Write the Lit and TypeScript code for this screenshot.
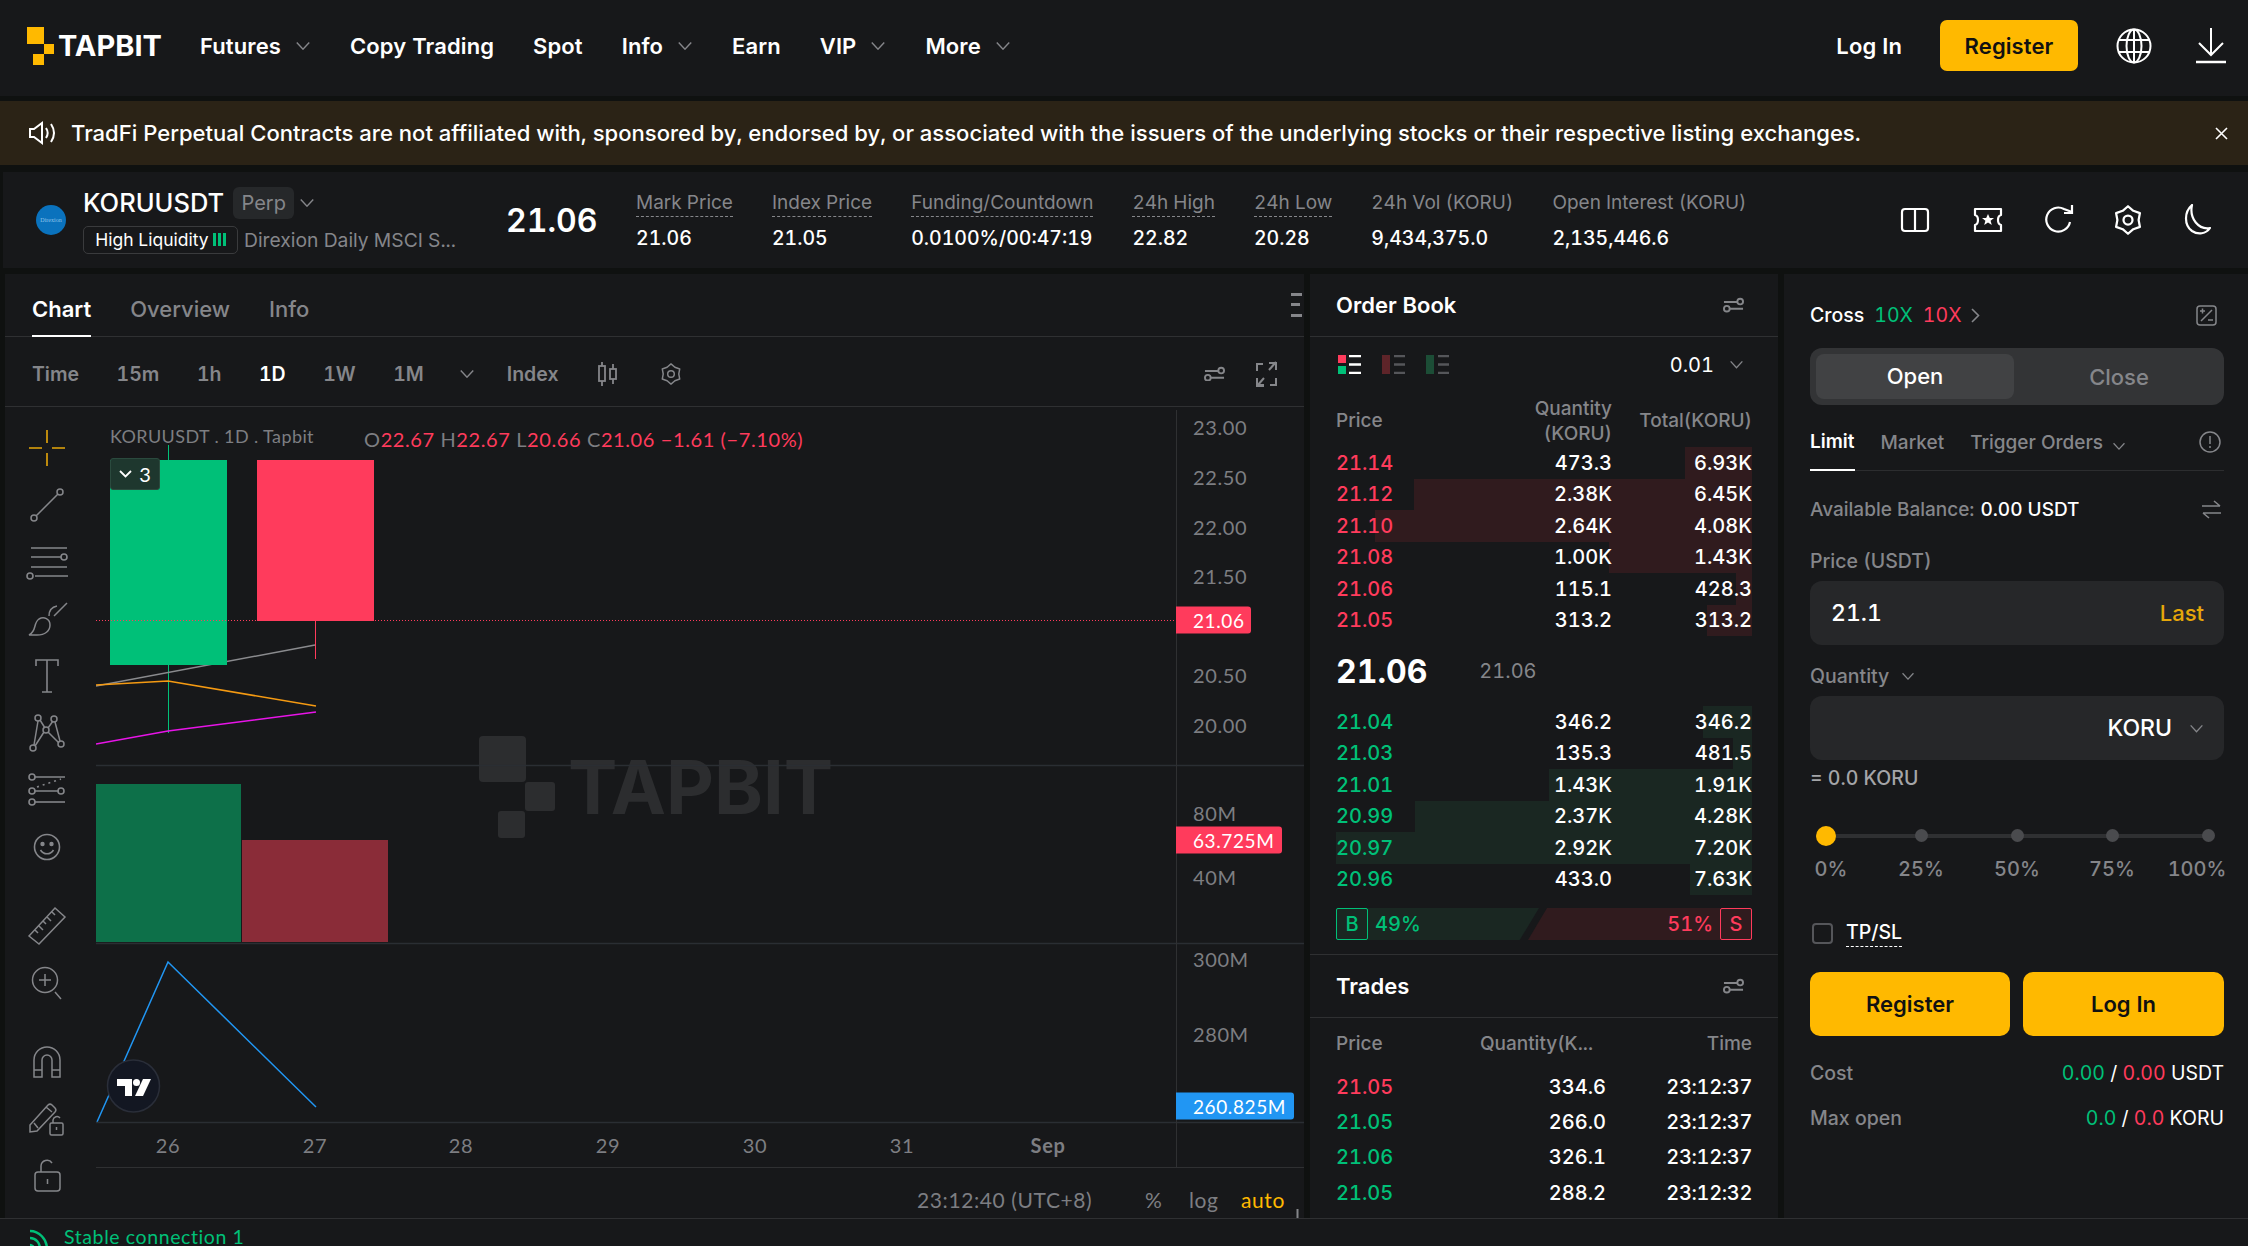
import { LitElement, css, html } from "lit";
import { customElement } from "lit/decorators.js";

const chev = (w = 16, cls = "") =>
  html`<svg class="chev ${cls}" width=${w} height=${w * 0.6} viewBox="0 0 16 10" fill="none" stroke="currentColor" stroke-width="1.5"><path d="M1.5 1.5 8 8.5l6.5-7" /></svg>`;

const sliders = (w = 21) =>
  html`<svg class="ico" width=${w} height=${w * 0.75} viewBox="0 0 22 16" fill="none" stroke="#85868a" stroke-width="2"><path d="M1 5h14M7 12h14" /><circle cx="18" cy="4.5" r="3" /><circle cx="4" cy="12" r="3" /></svg>`;

const gearPts =
  "12,1 16.25,4.64 21.53,6.5 20.5,12 21.53,17.5 16.25,19.36 12,23 7.75,19.36 2.47,17.5 3.5,12 2.47,6.5 7.75,4.64";

const gear = (size: number, color: string, sw = 1.6) =>
  html`<svg width=${size} height=${size} viewBox="0 0 24 24" fill="none" stroke=${color} stroke-width=${sw} stroke-linejoin="round"><polygon points=${gearPts} /><circle cx="12" cy="12" r="3.6" /></svg>`;

const tools = [
  [
    html`<svg width="36" height="36" viewBox="0 0 36 36" stroke="#e6a70a" stroke-width="1.6"><path d="M18 0v13M18 23v13M0 18h13M23 18h13" /></svg>`,
    html`<svg width="36" height="36" viewBox="0 0 36 36" fill="none" stroke="#85868a" stroke-width="1.5"><circle cx="5" cy="31" r="3" /><circle cx="31" cy="5" r="3" /><path d="M7 29 29 7" /></svg>`,
    html`<svg width="42" height="36" viewBox="0 0 42 36" fill="none" stroke="#85868a" stroke-width="1.6"><path d="M5 4h36M5 13h30M5 23h36M9 32h34" /><circle cx="38" cy="13" r="3" /><circle cx="4" cy="32" r="3" /></svg>`,
    html`<svg width="42" height="36" viewBox="0 0 42 36" fill="none" stroke="#85868a" stroke-width="1.5"><path d="M3 34c8-4 4-12 10-16 5-3 11 0 11 6 0 6-5 10-13 10H3zM23 15c0-6 3-9 8-10M28 15 41 2" /></svg>`,
    html`<svg width="30" height="36" viewBox="0 0 30 36" fill="none" stroke="#85868a" stroke-width="1.6"><path d="M4 8V2h22v6M15 2v32M10 34h10" /></svg>`,
    html`<svg width="40" height="38" viewBox="0 0 40 38" fill="none" stroke="#85868a" stroke-width="1.5"><circle cx="6" cy="34" r="3" /><circle cx="11" cy="4" r="3" /><circle cx="27" cy="5" r="3" /><circle cx="34" cy="30" r="3" /><circle cx="19" cy="16" r="3" /><path d="m7 31 4-24M13 6l5 8M21 14l5-7M28 8l5 19M8 32l9-14M21 18l11 11" /></svg>`,
    html`<svg width="40" height="34" viewBox="0 0 40 34" fill="none" stroke="#85868a" stroke-width="1.6"><circle cx="5" cy="4" r="3" /><path d="M8 4h30M8 18h24" /><circle cx="5" cy="18" r="3" /><circle cx="34" cy="18" r="3" /><circle cx="5" cy="29" r="3" /><path d="M8 29h30" /><path d="m10 14 24-8" stroke-dasharray="2 4" /></svg>`,
    html`<svg width="30" height="30" viewBox="0 0 30 30" fill="none" stroke="#85868a" stroke-width="1.6"><circle cx="15" cy="15" r="12.5" /><circle cx="10.5" cy="12" r="1.4" fill="#85868a" /><circle cx="19.5" cy="12" r="1.4" fill="#85868a" /><path d="M8.5 18c3 5 10 5 13 0" /></svg>`,
  ],
  [
    html`<svg width="40" height="40" viewBox="0 0 40 40" fill="none" stroke="#85868a" stroke-width="1.5"><path d="M2 30 28 2l10 9-26 27zM8 24l3 3M12 20l4 4M16 15l3 3M20 11l4 4M25 6l3 3" /></svg>`,
    html`<svg width="32" height="34" viewBox="0 0 32 34" fill="none" stroke="#85868a" stroke-width="1.5"><circle cx="14" cy="14" r="12.5" /><path d="M14 8v12M8 14h12M24 26l6 7" /></svg>`,
  ],
  [
    html`<svg width="28" height="32" viewBox="0 0 28 32" fill="none" stroke="#85868a" stroke-width="1.5"><path d="M1 31V14a13 13 0 0 1 26 0v17h-8V14a5 5 0 0 0-10 0v17zM1 24h8M19 24h8" /></svg>`,
    html`<svg width="38" height="36" viewBox="0 0 38 36" fill="none" stroke="#85868a" stroke-width="1.5"><path d="M2 24 20 4a3 3 0 0 1 4 0l3 3a3 3 0 0 1 0 4L9 30l-7 1zM6 22l4 5M18 6l6 5" /><rect x="22" y="22" width="13" height="12" rx="1.5" /><path d="M25 22v-3a4 4 0 0 1 7-2" /><path d="M28.500 26v3" /></svg>`,
    html`<svg width="28" height="34" viewBox="0 0 28 34" fill="none" stroke="#85868a" stroke-width="1.5"><rect x="2" y="13" width="25" height="19" rx="3" /><path d="M8 13V7a6 6 0 0 1 11-3M14.500 20v5" /></svg>`,
  ],
];

const stats = [
  ["Mark Price", "21.06", true],
  ["Index Price", "21.05", true],
  ["Funding/Countdown", "0.0100%/00:47:19", true],
  ["24h High", "22.82", true],
  ["24h Low", "20.28", true],
  ["24h Vol (KORU)", "9,434,375.0", false],
  ["Open Interest (KORU)", "2,135,446.6", false],
] as const;

const asks = [
  ["21.14", "473.3", "6.93K", 67],
  ["21.12", "2.38K", "6.45K", 338],
  ["21.10", "2.64K", "4.08K", 377],
  ["21.08", "1.00K", "1.43K", 143],
  ["21.06", "115.1", "428.3", 16],
  ["21.05", "313.2", "313.2", 45],
] as const;

const bids = [
  ["21.04", "346.2", "346.2", 49],
  ["21.03", "135.3", "481.5", 19],
  ["21.01", "1.43K", "1.91K", 203],
  ["20.99", "2.37K", "4.28K", 337],
  ["20.97", "2.92K", "7.20K", 416],
  ["20.96", "433.0", "7.63K", 62],
] as const;

const trades = [
  ["21.05", "334.6", "23:12:37", "red"],
  ["21.05", "266.0", "23:12:37", "green"],
  ["21.06", "326.1", "23:12:37", "green"],
  ["21.05", "288.2", "23:12:32", "green"],
] as const;

// price axis labels, in page coordinates
const axis: [string, number][] = [
  ["23.00", 427],
  ["22.50", 477],
  ["22.00", 527],
  ["21.50", 576],
  ["20.50", 675],
  ["20.00", 725],
  ["80M", 813],
  ["40M", 877],
  ["300M", 959],
  ["280M", 1034],
];

const tags: [string, number, number, string][] = [
  ["21.06", 620, 75, "#ff3b5c"],
  ["63.725M", 840, 106, "#ff3b5c"],
  ["260.825M", 1106, 118, "#2196f3"],
];

const dates: [string, number][] = [
  ["26", 168],
  ["27", 315],
  ["28", 461],
  ["29", 608],
  ["30", 755],
  ["31", 902],
];

const at = (x: number, y: number) => `left:${x - 96}px;top:${y - 407}px`;

@customElement("app-root")
export class AppRoot extends LitElement {
  static styles = css`
    :host {
      display: block;
      width: 2248px;
      height: 1246px;
      overflow: hidden;
      background: #0f1110;
      color: #fff;
      font-family: Inter, "Liberation Sans", sans-serif;
      font-size: 20px;
      font-variant-numeric: tabular-nums;
    }
    svg {
      display: block;
      flex: none;
    }
    .red { color: #ff3b5c; }
    .green { color: #00c078; }
    .gray { color: #85868a; }

    .nav {
      height: 96px;
      box-sizing: border-box;
      background: #17181a;
      display: flex;
      align-items: center;
      padding: 0 21px 5px 27px;
      margin-bottom: 5px;
      font-size: 22px;
      font-weight: 600;
      letter-spacing: 0.1px;
    }
    .logo {
      display: flex;
      align-items: center;
      font-size: 29px;
      font-weight: 700;
      width: 173px;
      gap: 4px;
      letter-spacing: 0;
    }
    .menu {
      display: flex;
      align-items: center;
      gap: 39px;
    }
    .menu span {
      display: flex;
      align-items: center;
      gap: 14px;
    }
    .menu .chev { color: #85868a; }
    .nav-right {
      margin-left: auto;
      display: flex;
      align-items: center;
    }
    .reg {
      background: #ffb900;
      color: #111;
      border-radius: 7px;
      width: 138px;
      height: 51px;
      display: flex;
      align-items: center;
      justify-content: center;
      margin: 0 38px 0 38px;
    }
    .nav-right svg + svg { margin-left: 43px; }

    .banner {
      height: 64px;
      background: #2b2316;
      display: flex;
      align-items: center;
      padding: 0 20px 0 28px;
      margin-bottom: 7px;
      font-size: 22.050px;
      font-weight: 500;
      gap: 14px;
    }
    .banner .close { margin-left: auto; }

    .ticker {
      height: 96px;
      margin: 0 0 6px 3px;
      background: #17181a;
      display: flex;
      align-items: center;
      padding: 0 37px 0 33px;
    }
    .coin {
      width: 30px;
      height: 30px;
      border-radius: 50%;
      background: #0a72bd;
      color: #8fc4ea;
      font: 6px "Liberation Serif", serif;
      display: flex;
      align-items: center;
      justify-content: center;
      margin-right: 17px;
      flex: none;
    }
    .symbol {
      width: 423px;
      display: flex;
      flex-direction: column;
      gap: 7px;
    }
    .sym-top, .sym-bot {
      display: flex;
      align-items: center;
    }
    .sym-top { font-size: 25.500px; font-weight: 500; gap: 9px; height: 32px; }
    .perp {
      background: #26282a;
      color: #85868a;
      font-size: 20px;
      font-weight: 400;
      height: 32px;
      width: 61px;
      border-radius: 6px;
      display: flex;
      align-items: center;
      justify-content: center;
    }
    .sym-top .chev { margin-left: -4px; color: #85868a; }
    .liq {
      border: 1px solid #3a3b3d;
      border-radius: 5px;
      height: 28px;
      width: 155px;
      box-sizing: border-box;
      display: flex;
      align-items: center;
      justify-content: center;
      gap: 4px;
      font-size: 17.500px;
      margin-right: 6px;
    }
    .liq i {
      display: flex;
      gap: 2px;
    }
    .liq b {
      width: 3px;
      height: 13px;
      background: #00c078;
    }
    .sym-bot .gray { font-size: 19.300px; }
    .last {
      font-size: 32px;
      font-weight: 600;
      width: 130px;
    }
    .stats {
      display: flex;
      gap: 39px;
    }
    .stat {
      display: flex;
      flex-direction: column;
      gap: 9px;
      font-size: 19.500px;
      font-weight: 500;
    }
    .stat label {
      color: #85868a;
      font-weight: 400;
      font-size: 19px;
      padding-bottom: 2px;
      border-bottom: 1px dashed transparent;
    }
    .stat label.dash { border-bottom-color: #85868a; }
    .ticker-icons {
      margin-left: auto;
      display: flex;
      align-items: center;
      gap: 39px;
    }
    .ticker-icons .g1 { margin-right: 3px; }
    .ticker-icons .g2 { margin-right: 2px; }

    .main {
      height: 944px;
      display: flex;
      gap: 6px;
      padding-left: 5px;
    }
    .panel { background: #17181a; }
    .chart {
      width: 1299px;
      display: flex;
      flex-direction: column;
    }
    .tabs {
      height: 63px;
      flex: none;
      box-sizing: border-box;
      border-bottom: 1px solid #2f3032;
      display: flex;
      gap: 39px;
      padding-left: 27px;
      align-items: stretch;
      font-size: 22px;
      color: #85868a;
      font-weight: 500;
      position: relative;
    }
    .tabs span {
      display: flex;
      align-items: center;
      padding-top: 8px;
      box-sizing: border-box;
    }
    .tabs .on {
      color: #fff;
      font-weight: 600;
      border-bottom: 2px solid #fff;
      margin-bottom: -1px;
    }
    .burger {
      position: absolute;
      right: 2px;
      top: 19px;
    }
    .bar {
      height: 70px;
      flex: none;
      box-sizing: border-box;
      border-bottom: 1px solid #2f3032;
      display: flex;
      align-items: center;
      gap: 37.500px;
      padding: 4px 27px 0;
      font-size: 19.500px;
      font-weight: 600;
      color: #85868a;
    }
    .bar .on { color: #fff; }
    .bar .chev { margin: 0 -6px 0 -2px; }
    .bar .candles { margin-left: 1px; margin-right: 6px; }
    .bar .right {
      margin-left: auto;
      display: flex;
      gap: 31px;
      align-items: center;
      padding-right: 0;
    }
    .canvas {
      flex: 1;
      display: flex;
      position: relative;
      min-height: 0;
    }
    .tools {
      width: 91px;
      flex: none;
      padding-top: 12px;
      box-sizing: border-box;
      display: flex;
      flex-direction: column;
      gap: 22px;
    }
    .group {
      display: flex;
      flex-direction: column;
    }
    .tool {
      height: 57px;
      width: 84px;
      display: flex;
      align-items: center;
      justify-content: center;
    }
    .plot {
      flex: 1;
      position: relative;
      overflow: hidden;
      font-family: Lato, "Open Sans", sans-serif;
      font-size: 20px;
      font-variant-numeric: normal;
      color: #7d7e82;
    }
    .plot > svg {
      position: absolute;
      left: 0;
      top: 0;
    }
    .lbl {
      position: absolute;
      transform: translateY(-50%);
      white-space: nowrap;
      letter-spacing: 0.6px;
    }
    .lbl.mid { transform: translate(-50%, -50%); }
    .lbl.sm { font-size: 18px; letter-spacing: 0.4px; }
    .lbl.lg { font-size: 21px; }
    .tag {
      position: absolute;
      transform: translateY(-50%);
      height: 27px;
      border-radius: 0 3px 3px 0;
      color: #fff;
      display: flex;
      align-items: center;
      padding-left: 17px;
      box-sizing: border-box;
      font-size: 19px;
      letter-spacing: 0.6px;
    }
    .badge {
      position: absolute;
      width: 50px;
      height: 32px;
      box-sizing: border-box;
      background: #1e372e;
      border: 1px solid #2b4a3e;
      border-radius: 3px;
      color: #fff;
      display: flex;
      align-items: center;
      justify-content: center;
      gap: 7px;
    }
    .mark {
      position: absolute;
      display: flex;
      align-items: center;
      font-family: Inter, sans-serif;
      font-size: 74px;
      font-weight: 700;
      color: #2c2d2f;
      gap: 13px;
    }

    .book {
      width: 468px;
      display: flex;
      flex-direction: column;
    }
    .head {
      height: 63px;
      flex: none;
      box-sizing: border-box;
      border-bottom: 1px solid #2f3032;
      display: flex;
      align-items: center;
      justify-content: space-between;
      padding: 0 34px 0 26px;
      font-size: 22px;
      font-weight: 600;
    }
    .view {
      height: 53px;
      flex: none;
      box-sizing: border-box;
      display: flex;
      align-items: center;
      gap: 21px;
      padding: 2px 34px 0 28px;
      font-size: 20px;
    }
    .view .prec {
      margin-left: auto;
      display: flex;
      align-items: center;
      gap: 15px;
    }
    .view .chev { color: #85868a; }
    .cols, .row {
      display: grid;
      grid-template-columns: 120px 156px 140px;
      margin: 0 26px;
      position: relative;
    }
    .cols {
      height: 57px;
      box-sizing: border-box;
      padding-top: 4px;
      align-items: center;
      color: #85868a;
      font-weight: 500;
      font-size: 19px;
      line-height: 25px;
    }
    .right { text-align: right; }
    .row {
      height: 31.500px;
      align-items: center;
      font-size: 20px;
      font-weight: 500;
    }
    .row > span { position: relative; }
    .depth {
      position: absolute;
      right: 0;
      top: 0;
      bottom: 0;
    }
    .depth.a { background: #301b1e; }
    .depth.b { background: #1a2722; }
    .midp {
      height: 70px;
      flex: none;
      display: flex;
      align-items: center;
      padding-left: 26px;
      font-size: 32px;
      font-weight: 700;
    }
    .midp span {
      font-size: 20px;
      font-weight: 400;
      color: #85868a;
      margin-left: 52px;
    }
    .ratio {
      margin: 13px 26px 0;
      height: 32px;
      flex: none;
      position: relative;
      display: flex;
      justify-content: space-between;
      font-weight: 500;
      font-size: 20px;
    }
    .ratio .fill {
      position: absolute;
      top: 0;
      bottom: 0;
    }
    .ratio .fb {
      left: 0;
      width: 203px;
      background: #1a2722;
      clip-path: polygon(0 0, 100% 0, 90.500% 100%, 0 100%);
    }
    .ratio .fs {
      right: 0;
      width: 224px;
      background: #301b1e;
      clip-path: polygon(8.500% 0, 100% 0, 100% 100%, 0 100%);
    }
    .side {
      position: relative;
      display: flex;
      align-items: center;
      gap: 7px;
    }
    .side i {
      font-style: normal;
      box-sizing: border-box;
      width: 32px;
      height: 32px;
      border: 1px solid currentColor;
      border-radius: 2px;
      display: flex;
      align-items: center;
      justify-content: center;
    }
    .sep {
      margin-top: 14px;
      border-top: 1px solid #2f3032;
      flex: none;
    }
    .tcols {
      grid-template-columns: 120px 137px 159px;
      height: 51px;
      padding-top: 0;
    }
    .trow {
      grid-template-columns: 120px 150px 146px;
      height: 35.300px;
    }
    .trow span:last-child { letter-spacing: -0.35px; }

    .order {
      flex: 1;
      padding: 0 24px 0 26px;
      display: flex;
      flex-direction: column;
    }
    .cross {
      height: 74px;
      box-sizing: border-box;
      padding-top: 8px;
      flex: none;
      display: flex;
      align-items: center;
      gap: 10px;
      font-size: 19.500px;
      font-weight: 500;
    }
    .cross .n { font-weight: 400; }
    .cross > svg:last-child { margin-left: auto; margin-right: 7px; }
    .seg {
      height: 57px;
      flex: none;
      box-sizing: border-box;
      background: #333436;
      border-radius: 12px;
      padding: 6px;
      display: grid;
      grid-template-columns: 198px 1fr;
      font-size: 22px;
      font-weight: 500;
      color: #85868a;
      text-align: center;
      align-items: center;
    }
    .seg .on {
      background: #414244;
      color: #fff;
      border-radius: 8px;
      height: 45px;
      line-height: 45px;
    }
    .seg span + span { padding-left: 6px; }
    .otabs {
      height: 66px;
      flex: none;
      box-sizing: border-box;
      border-bottom: 1px solid #2c2d2f;
      display: flex;
      gap: 26px;
      color: #85868a;
      font-size: 19px;
      font-weight: 500;
      align-items: stretch;
      position: relative;
    }
    .otabs span {
      display: flex;
      align-items: center;
      gap: 9px;
      padding-top: 9px;
    }
    .otabs .on {
      color: #fff;
      border-bottom: 2px solid #fff;
      margin-bottom: -1px;
      font-weight: 600;
    }
    .otabs svg:last-child {
      margin: 9px 3px 0 auto;
      align-self: center;
    }
    .bal {
      height: 74px;
      flex: none;
      box-sizing: border-box;
      padding-top: 2px;
      display: flex;
      align-items: center;
      color: #85868a;
      font-size: 19px;
      font-weight: 500;
      gap: 6px;
    }
    .bal b { color: #fff; font-weight: 500; }
    .bal svg { margin-left: auto; margin-right: 3px; }
    .flabel {
      height: 32px;
      flex: none;
      display: flex;
      align-items: center;
      gap: 12px;
      color: #85868a;
      font-size: 19.500px;
      font-weight: 500;
    }
    .input {
      height: 64px;
      flex: none;
      background: #262729;
      border-radius: 12px;
      display: flex;
      align-items: center;
      justify-content: space-between;
      padding: 0 20px 0 21px;
      font-size: 23px;
      font-weight: 500;
    }
    .input .gold { color: #e6a70a; font-size: 22px; }
    .unit {
      margin-left: auto;
      display: flex;
      align-items: center;
      gap: 17px;
    }
    .unit .chev { color: #85868a; }
    .approx {
      height: 36px;
      flex: none;
      display: flex;
      align-items: center;
      font-size: 19.500px;
      font-weight: 500;
      color: #a4a5a8;
    }
    .slider {
      position: relative;
      height: 20px;
      margin-top: 30px;
      flex: none;
    }
    .track {
      position: absolute;
      left: 6px;
      width: 388px;
      top: 8px;
      height: 4px;
      background: #2f3032;
    }
    .dot {
      position: absolute;
      top: 3px;
      width: 13px;
      height: 13px;
      border-radius: 50%;
      background: #4a4b4e;
    }
    .thumb {
      position: absolute;
      left: 6px;
      top: 0;
      width: 20px;
      height: 20px;
      border-radius: 50%;
      background: #ffb900;
    }
    .pcts {
      position: relative;
      height: 24px;
      margin-top: 11px;
      flex: none;
      font-size: 20px;
      font-weight: 500;
      color: #85868a;
    }
    .pcts span {
      position: absolute;
      transform: translateX(-50%);
    }
    .tpsl {
      margin-top: 37px;
      height: 30px;
      flex: none;
      display: flex;
      align-items: center;
      gap: 13px;
      padding-left: 2px;
      font-size: 19.500px;
      font-weight: 500;
    }
    .box {
      width: 21px;
      height: 21px;
      box-sizing: border-box;
      border: 2.500px solid #55565a;
      border-radius: 4px;
    }
    .tpsl u {
      text-decoration: none;
      border-bottom: 1.500px dashed #fff;
      padding-bottom: 2px;
    }
    .btns {
      margin: 24px 0 15px;
      display: grid;
      grid-template-columns: 200px 201px;
      gap: 13px;
      height: 64px;
      flex: none;
    }
    .btns span {
      background: #ffb900;
      color: #111;
      border-radius: 10px;
      font-size: 22px;
      font-weight: 600;
      display: flex;
      align-items: center;
      justify-content: center;
    }
    .kv {
      height: 44.500px;
      flex: none;
      display: flex;
      align-items: center;
      justify-content: space-between;
      font-size: 19.500px;
      font-weight: 400;
      white-space: pre;
    }
    .kv label { color: #85868a; font-weight: 500; }

    .status {
      height: 28px;
      box-sizing: border-box;
      background: #17181a;
      border-top: 1px solid #2f3032;
      display: flex;
      gap: 15px;
      padding-left: 29px;
      font-family: Lato, "Open Sans", sans-serif;
      font-size: 19.500px;
      letter-spacing: 0.6px;
      color: #00c078;
      line-height: 36px;
      overflow: hidden;
    }
    .status svg { margin-top: 10px; }
  `;

  private renderBookRow(r: readonly [string, string, string, number], side: "a" | "b") {
    return html`<div class="row">
      <div class="depth ${side}" style="width:${r[3]}px"></div>
      <span class=${side === "a" ? "red" : "green"}>${r[0]}</span>
      <span class="right">${r[1]}</span>
      <span class="right">${r[2]}</span>
    </div>`;
  }

  private renderPlot() {
    return html`<div class="plot">
      <div class="mark" style=${at(479, 736)}>
        <svg width="76" height="102" viewBox="0 0 76 102" fill="#2c2d2f">
          <rect x="0" y="0" width="47" height="46" rx="4" />
          <rect x="46" y="46" width="30" height="29" rx="3" />
          <rect x="19" y="75" width="27" height="27" rx="3" />
        </svg>
        <span>TAPBIT</span>
      </div>
      <svg width="1208" height="811" viewBox="96 407 1208 811" fill="none">
        <path d="M168.500 445V733" stroke="#00c078" stroke-width="1" />
        <path d="M96 686 315 645" stroke="#8a8b8e" stroke-width="1.500" />
        <path d="M96 685 168 681 316 706" stroke="#f59a12" stroke-width="1.500" />
        <path d="M96 744 168 731 316 712" stroke="#e814e8" stroke-width="1.500" />
        <rect x="110" y="460" width="117" height="205" fill="#00c078" />
        <path d="M315.500 620V659" stroke="#ff3b5c" />
        <rect x="257" y="460" width="117" height="161" fill="#ff3b5c" />
        <path d="M96 620.500H1176" stroke="#ff3b5c" stroke-dasharray="1 2" />
        <rect x="96" y="784" width="145" height="158" fill="#0d7049" />
        <rect x="242" y="840" width="146" height="102" fill="#8a2c38" />
        <path d="M97 1122 168 962 316 1107" stroke="#2196f3" stroke-width="1.500" />
        <path d="M96 765.500H1304M96 943.500H1304M96 1122.500H1304" stroke="#2a2e33" stroke-width="1.500" />
        <path d="M96 1167.500H1304" stroke="#2f3032" />
        <path d="M1176.500 410V1167" stroke="#2f3032" />
        <circle cx="133.500" cy="1086" r="26" fill="#131722" stroke="#2a2e39" stroke-width="1.500" />
        <path d="M117 1079h15v17h-7v-10h-8z" fill="#fff" />
        <circle cx="136.500" cy="1082.500" r="3.500" fill="#fff" />
        <path d="M143 1079h8l-8 17h-8z" fill="#fff" />
        <path d="M89 1109l-3 6 3 6" stroke="#85868a" stroke-width="1.500" />
        <path d="M1297.500 1209V1218" stroke="#85868a" stroke-width="2" />
      </svg>
      <div class="lbl sm" style=${at(110, 436)}>KORUUSDT . 1D . Tapbit</div>
      <div class="lbl" style=${at(364, 439)}>
        O<span class="red">22.67</span> H<span class="red">22.67</span> L<span class="red">20.66</span>
        C<span class="red">21.06</span> <span class="red">−1.61 (−7.10%)</span>
      </div>
      <div class="badge" style=${at(110, 458)}>
        <svg width="13" height="8" viewBox="0 0 13 8" fill="none" stroke="#fff" stroke-width="1.800"><path d="m1 1 5.500 5.500L12 1" /></svg>
        <span>3</span>
      </div>
      ${axis.map(([t, y]) => html`<div class="lbl" style=${at(1193, y)}>${t}</div>`)}
      ${tags.map(
        ([t, y, w, c]) =>
          html`<div class="tag" style="${at(1176, y)};width:${w}px;background:${c}">${t}</div>`
      )}
      ${dates.map(([t, x]) => html`<div class="lbl mid" style=${at(x, 1145)}>${t}</div>`)}
      <div class="lbl mid" style="${at(1048, 1145)};font-weight:700">Sep</div>
      <div class="lbl lg" style=${at(917, 1199)}>23:12:40 (UTC+8)</div>
      <div class="lbl lg" style=${at(1145, 1199)}>%</div>
      <div class="lbl lg" style=${at(1189, 1199)}>log</div>
      <div class="lbl lg" style="${at(1241, 1199)};color:#ffb900">auto</div>
    </div>`;
  }

  render() {
    return html`
      <div class="nav">
        <div class="logo">
          <svg width="27" height="38" viewBox="0 0 27 38" fill="#ffb900">
            <rect x="0" y="0" width="17" height="17" />
            <rect x="17" y="17" width="10" height="10" />
            <rect x="6" y="27" width="11" height="11" />
          </svg>
          <span>TAPBIT</span>
        </div>
        <div class="menu">
          <span>Futures ${chev()}</span>
          <span>Copy Trading</span>
          <span>Spot</span>
          <span>Info ${chev()}</span>
          <span>Earn</span>
          <span>VIP ${chev()}</span>
          <span>More ${chev()}</span>
        </div>
        <div class="nav-right">
          <span>Log In</span>
          <span class="reg">Register</span>
          <svg width="36" height="36" viewBox="0 0 36 36" fill="none" stroke="#fff" stroke-width="2"><circle cx="18" cy="18" r="16.500" /><ellipse cx="18" cy="18" rx="7.500" ry="16.500" /><path d="M3 12h30M3 24h30M18 2v32" /></svg>
          <svg width="32" height="36" viewBox="0 0 32 36" fill="none" stroke="#fff" stroke-width="2"><path d="M16 0v27M4 15l12 12 12-12" /><path d="M1 34h30" stroke-width="2.500" /></svg>
        </div>
      </div>

      <div class="banner">
        <svg width="29" height="24" viewBox="0 0 29 24" fill="none" stroke="#fff" stroke-width="2"><path d="M2 8v8h4l8 6V2L6 8zM18 7c2 3 2 7 0 10M23 3c4 6 4 12 0 18" /></svg>
        <span>TradFi Perpetual Contracts are not affiliated with, sponsored by, endorsed by, or associated with the issuers of the underlying stocks or their respective listing exchanges.</span>
        <svg class="close" width="13" height="13" viewBox="0 0 13 13" stroke="#fff" stroke-width="1.600"><path d="m1 1 11 11M12 1 1 12" /></svg>
      </div>

      <div class="ticker">
        <div class="coin">Direxion</div>
        <div class="symbol">
          <div class="sym-top"><span>KORUUSDT</span><span class="perp">Perp</span>${chev(16)}</div>
          <div class="sym-bot">
            <span class="liq">High Liquidity <i><b></b><b></b><b></b></i></span>
            <span class="gray">Direxion Daily MSCI S...</span>
          </div>
        </div>
        <div class="last">21.06</div>
        <div class="stats">
          ${stats.map(
            ([l, v, d]) => html`<div class="stat">
              <label class=${d ? "dash" : ""}>${l}</label>
              <span>${v}</span>
            </div>`
          )}
        </div>
        <div class="ticker-icons">
          <svg class="g1" width="30" height="26" viewBox="0 0 30 26" fill="none" stroke="#fff" stroke-width="2.200"><rect x="2" y="2" width="26" height="22" rx="3" /><path d="M15 2v22" /></svg>
          <svg class="g2" width="32" height="26" viewBox="0 0 32 26" fill="none" stroke="#fff" stroke-width="2.200"><path d="M3 2h26v6c-4 1-4 9 0 10v6H3v-6c4-1 4-9 0-10z" stroke-linejoin="round" /><path d="m16 7 1.800 4h4.200l-3.400 2.800 1.200 4.200-3.800-2.400-3.800 2.400 1.200-4.200L10 11h4.200z" fill="#fff" stroke="none" /></svg>
          <svg width="29" height="30" viewBox="0 0 29 30" fill="none" stroke="#fff" stroke-width="2.200"><path d="M25 17a12 12 0 1 1-6-13l8 3" /><path d="M27 0v8h-8" /></svg>
          ${gear(30, "#fff", 1.8)}
          <svg width="29" height="32" viewBox="0 0 29 32" fill="none" stroke="#fff" stroke-width="2.200"><path d="M10 1C2 8 2 21 10 27c6 4 14 3 18-3C17 26 7 15 10 1z" stroke-linejoin="round" /></svg>
        </div>
      </div>

      <div class="main">
        <div class="panel chart">
          <div class="tabs">
            <span class="on">Chart</span>
            <span>Overview</span>
            <span>Info</span>
            <svg class="burger" width="11" height="24" viewBox="0 0 11 24" fill="#85868a"><rect y="0" width="11" height="3" /><rect y="10" width="9" height="3" /><rect y="21" width="11" height="3" /></svg>
          </div>
          <div class="bar">
            <span>Time</span><span>15m</span><span>1h</span><span class="on">1D</span><span>1W</span><span>1M</span>
            ${chev(16)}
            <span>Index</span>
            <svg class="candles" width="20" height="26" viewBox="0 0 20 26" fill="none" stroke="#85868a" stroke-width="1.800"><rect x="2" y="5" width="6" height="15" /><rect x="13" y="8" width="6" height="10" /><path d="M5 1v4M5 20v5M16 3v5M16 18v5" /></svg>
            ${gear(22, "#85868a")}
            <div class="right">
              ${sliders()}
              <svg width="21" height="26" viewBox="0 0 21 26" fill="none" stroke="#85868a" stroke-width="2"><path d="M1 10V3h6M14 24h6v-7M8 24H1v-7M20 1l-7 8M13 2h7v7M1 25l7-8M1 18v7h7" /></svg>
            </div>
          </div>
          <div class="canvas">
            <div class="tools">
              ${tools.map(
                (g) => html`<div class="group">${g.map((t) => html`<div class="tool">${t}</div>`)}</div>`
              )}
            </div>
            ${this.renderPlot()}
          </div>
        </div>

        <div class="panel book">
          <div class="head"><span>Order Book</span>${sliders()}</div>
          <div class="view">
            <svg width="23" height="19" viewBox="0 0 23 19"><rect width="8" height="8" fill="#ff3b5c" /><rect y="11" width="8" height="8" fill="#00c078" /><path d="M11 1h12M11 9.500h12M11 18h12" stroke="#fff" stroke-width="2.500" /></svg>
            <svg width="23" height="19" viewBox="0 0 23 19"><rect width="8" height="19" fill="#5e2429" /><path d="M12 1h11M12 9.500h11M12 18h11" stroke="#55565a" stroke-width="2.500" /></svg>
            <svg width="23" height="19" viewBox="0 0 23 19"><rect width="8" height="19" fill="#1c4d36" /><path d="M12 1h11M12 9.500h11M12 18h11" stroke="#55565a" stroke-width="2.500" /></svg>
            <div class="prec"><span>0.01</span>${chev(15)}</div>
          </div>
          <div class="cols">
            <span>Price</span>
            <span class="right">Quantity<br />(KORU)</span>
            <span class="right">Total(KORU)</span>
          </div>
          ${asks.map((r) => this.renderBookRow(r, "a"))}
          <div class="midp">21.06<span>21.06</span></div>
          ${bids.map((r) => this.renderBookRow(r, "b"))}
          <div class="ratio">
            <div class="fill fb"></div>
            <div class="fill fs"></div>
            <div class="side green"><i>B</i>49%</div>
            <div class="side red">51%<i>S</i></div>
          </div>
          <div class="sep"></div>
          <div class="head"><span>Trades</span>${sliders()}</div>
          <div class="cols tcols">
            <span>Price</span>
            <span class="right">Quantity(K...</span>
            <span class="right">Time</span>
          </div>
          ${trades.map(
            (r) => html`<div class="row trow">
              <span class=${r[3]}>${r[0]}</span>
              <span class="right">${r[1]}</span>
              <span class="right">${r[2]}</span>
            </div>`
          )}
        </div>

        <div class="panel order">
          <div class="cross">
            <span>Cross</span>
            <span class="green n">10X</span>
            <span class="red n">10X</span>
            <svg width="9" height="15" viewBox="0 0 9 15" fill="none" stroke="#85868a" stroke-width="1.600"><path d="m1 1 6.500 6.500L1 14" /></svg>
            <svg width="21" height="21" viewBox="0 0 21 21" fill="none" stroke="#85868a" stroke-width="1.500"><rect x="1" y="1" width="19" height="19" rx="3" /><path d="M5 16 16 5M4 6h5M6.500 3.500v5M12 15h5" /></svg>
          </div>
          <div class="seg"><span class="on">Open</span><span>Close</span></div>
          <div class="otabs">
            <span class="on">Limit</span>
            <span>Market</span>
            <span>Trigger Orders ${chev(14)}</span>
            <svg width="22" height="22" viewBox="0 0 22 22" fill="none" stroke="#85868a" stroke-width="1.500"><circle cx="11" cy="11" r="10" /><path d="M11 5v8M11 15v2" /></svg>
          </div>
          <div class="bal">
            <span>Available Balance:</span><b>0.00 USDT</b>
            <svg width="19" height="19" viewBox="0 0 19 19" fill="none" stroke="#85868a" stroke-width="1.600"><path d="M0 6h18M12 1l6 5M19 13H1M7 18l-6-5" /></svg>
          </div>
          <div class="flabel">Price (USDT)</div>
          <div class="input" style="margin-top:4px"><span>21.1</span><span class="gold">Last</span></div>
          <div class="flabel" style="margin-top:15px">Quantity ${chev(14)}</div>
          <div class="input" style="margin-top:4px"><span class="unit">KORU ${chev(15)}</span></div>
          <div class="approx">= 0.0 KORU</div>
          <div class="slider">
            <div class="track"></div>
            ${[105, 201, 296, 392].map((x) => html`<div class="dot" style="left:${x}px"></div>`)}
            <div class="thumb"></div>
          </div>
          <div class="pcts">
            ${[
              ["0%", 21],
              ["25%", 111],
              ["50%", 207],
              ["75%", 302],
              ["100%", 387],
            ].map(([t, x]) => html`<span style="left:${x}px">${t}</span>`)}
          </div>
          <div class="tpsl"><div class="box"></div><u>TP/SL</u></div>
          <div class="btns"><span>Register</span><span>Log In</span></div>
          <div class="kv">
            <label>Cost</label>
            <span><span class="green">0.00</span> / <span class="red">0.00</span> USDT</span>
          </div>
          <div class="kv">
            <label>Max open</label>
            <span><span class="green">0.0</span> / <span class="red">0.0</span> KORU</span>
          </div>
        </div>
      </div>

      <div class="status">
        <svg width="20" height="20" viewBox="0 0 20 20" fill="none" stroke="#00c078" stroke-width="2.500"><path d="M1 2c9 0 17 8 17 18M1 9c6 0 10 5 10 11M1 16c2 0 4 2 4 4" /></svg>
        <span>Stable connection 1</span>
      </div>
    `;
  }
}
